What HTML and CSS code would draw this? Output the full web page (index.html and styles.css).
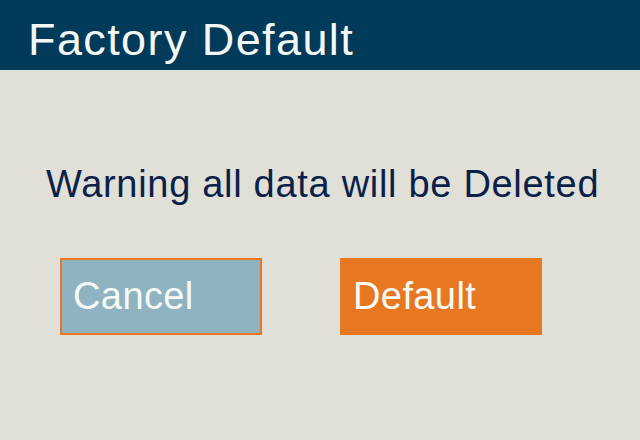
FILE: index.html
```html
<!DOCTYPE html>
<html lang="en">
<head>
    <meta charset="UTF-8">
    <title>Factory Default</title>
    <link rel="stylesheet" href="styles.css">
</head>
    <body>
        <div class="title-bar">Factory Default</div>
        <div class="content">
            <p class="warning">Warning all data will be Deleted</p>
            <div class="buttons">
                <button class="btn btn-cancel">Cancel</button>
                <button class="btn btn-default">Default</button>
            </div>
        </div>
    </body>
</html>
```

FILE: styles.css
```css
body
{
    margin: 0;
    width: 640px;
    height: 440px;
    overflow: hidden;
    background-color: #e0dfd8;
    font-family: "Liberation Sans", Arial, sans-serif;
}
.title-bar
{
    height: 70px;
    box-sizing: border-box;
    padding: 14px 0 0 28px;
    background: #023a5a;
    color: #f4f8f4;
    font-size: 45px;
    line-height: 52px;
    letter-spacing: 1.4px;
}
.content
{
    padding-top: 92px;
}
.warning
{
    margin: 0 0 0 46px;
    color: #0b1f48;
    font-size: 38px;
    line-height: 44px;
    letter-spacing: 0.7px;
}
.buttons
{
    display: flex;
    gap: 78px;
    margin: 52px 0 0 60px;
}
.btn
{
    width: 202px;
    height: 77px;
    box-sizing: border-box;
    padding: 0 0 0 11px;
    text-align: left;
    font-family: "Liberation Sans", Arial, sans-serif;
    font-size: 38px;
    letter-spacing: 0.4px;
    color: #f6faf6;
    border: 2px solid #e87722;
    border-radius: 0;
    cursor: pointer;
}
.btn-cancel
{
    background: #8fb3c0;
}
.btn-default
{
    background: #e87722;
}
```
